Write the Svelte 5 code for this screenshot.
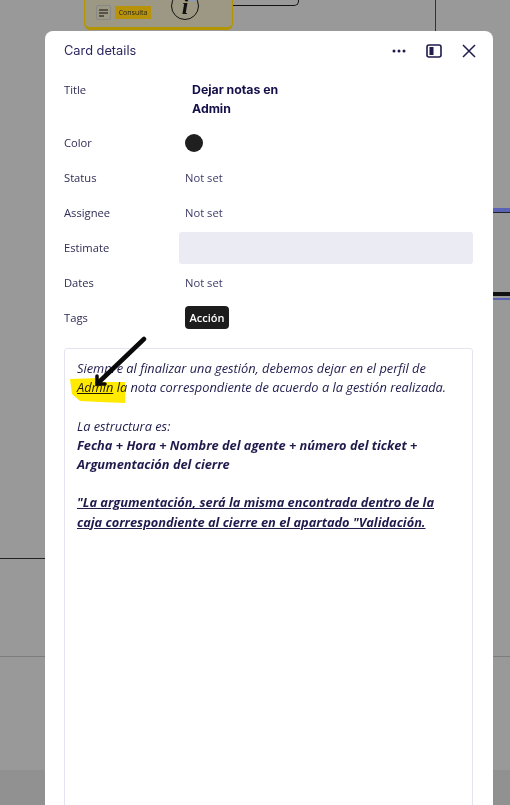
<script>
    let rows = [
        { label: "Status", value: "Not set" },
        { label: "Assignee", value: "Not set" },
        { label: "Estimate", empty: true },
        { label: "Dates", value: "Not set" },
    ];
</script>

<div class="board">
    <!-- canvas behind the dimmed overlay -->
    <div class="node">
        <span class="menu-btn">
            <svg width="9" height="8" viewBox="0 0 9 8"><path d="M0 1h9M0 4h9M0 7h5" stroke="#111" stroke-width="1.2" fill="none" /></svg>
        </span>
        <span class="node-tag">Consulta</span>
        <span class="info">i</span>
        <span class="info-corner"></span>
    </div>
    <div class="node-line"></div>
    <div class="vline"></div>
    <div class="hline left-black"></div>
    <div class="hline faint"></div>
    <div class="hline blue-top"></div>
    <div class="hline blue-bottom"></div>
    <div class="footer-band"></div>

    <div class="modal">
        <header>
            <h2>Card details</h2>
            <div class="actions">
                <svg width="14" height="4" viewBox="0 0 14 4"><circle cx="2" cy="2" r="1.5" /><circle cx="7" cy="2" r="1.5" /><circle cx="12" cy="2" r="1.5" /></svg>
                <svg width="16" height="14" viewBox="0 0 16 14"><rect x="1" y="1" width="14" height="12" rx="2" fill="none" stroke="#1f1b4d" stroke-width="1.6" /><rect x="3.5" y="3" width="4" height="8" /></svg>
                <svg width="14" height="14" viewBox="0 0 14 14"><path d="M1 1l12 12M13 1L1 13" stroke="#1f1b4d" stroke-width="1.5" fill="none" /></svg>
            </div>
        </header>

        <div class="row title-row">
            <span class="label">Title</span>
            <strong>Dejar notas en<br />Admin</strong>
        </div>
        <div class="row">
            <span class="label">Color</span>
            <span class="dot"></span>
        </div>
        {#each rows as row}
            <div class="row">
                <span class="label">{row.label}</span>
                {#if row.empty}
                    <span class="empty"></span>
                {:else}
                    <span class="value">{row.value}</span>
                {/if}
            </div>
        {/each}
        <div class="row">
            <span class="label">Tags</span>
            <span class="tag">Acción</span>
        </div>

        <div class="notes">
            <p><em>Siempre al finalizar una gestión, debemos dejar en el perfil de <u>Admin</u> la nota correspondiente de acuerdo a la gestión realizada.</em></p>
            <p><em>La estructura es:</em><br /><em><b>Fecha + Hora + Nombre del agente + número del ticket + Argumentación del cierre</b></em></p>
            <p><em><b><u>"La argumentación, será la misma encontrada dentro de la caja correspondiente al cierre en el apartado "Validación.</u></b></em></p>
            <!-- highlight and arrow scribbled on top of the screenshot -->
            <svg class="scribble" width="90" height="76" viewBox="0 0 90 76">
                <path d="M5 45 L34 44 L38 48 L60 48 L60 69 L35 68 L15 67 L7 60 Z" fill="#ffea00" />
                <path d="M79 5 L33 49" stroke="#0a0a0a" stroke-width="4.5" stroke-linecap="round" fill="none" />
                <path d="M32 42 L32 50 L40 50" stroke="#0a0a0a" stroke-width="3.5" stroke-linecap="round" fill="none" />
            </svg>
        </div>
    </div>
</div>

<style>
    :global(body) {
        margin: 0;
        background: #999999;
    }

    .board {
        position: relative;
        width: 510px;
        height: 805px;
        overflow: hidden;
        background: #999999;
        font-family: "Open Sans", "Noto Sans", sans-serif;
        color: #1f1b4d;
    }

    .node {
        position: absolute;
        left: 84px;
        top: -18px;
        width: 149px;
        height: 48px;
        box-sizing: border-box;
        background: #9c9884;
        border: 1px solid #b39500;
        border-bottom-width: 3px;
        border-radius: 6px;
    }

    .menu-btn {
        position: absolute;
        left: 11px;
        top: 22px;
        width: 13px;
        height: 13px;
        display: flex;
        align-items: center;
        justify-content: center;
        border: 1px solid #888;
        border-radius: 2px;
    }

    .node-tag {
        position: absolute;
        left: 30px;
        top: 23px;
        width: 36px;
        height: 13px;
        background: #b8930a;
        font: 7px/13px "Open Sans", sans-serif;
        text-align: center;
        color: #222;
    }

    .info {
        position: absolute;
        left: 86px;
        top: 9px;
        width: 26px;
        height: 26px;
        border: 1.5px solid #111;
        border-radius: 50%;
        font: italic bold 24px/26px "Liberation Serif", serif;
        text-align: center;
        color: #111;
    }

    .info-corner {
        position: absolute;
        left: 105px;
        top: 16px;
        width: 5px;
        height: 2px;
        background: #7d9cc9;
    }

    .node-line {
        position: absolute;
        left: 233px;
        top: -19px;
        width: 65px;
        height: 24px;
        border: 1px solid #111;
        border-top: 0;
        border-left: 0;
        border-radius: 0 0 5px 0;
        border-bottom-width: 1.5px;
    }

    .vline {
        position: absolute;
        left: 435px;
        top: 0;
        width: 1px;
        height: 31px;
        background: #333;
    }

    .hline {
        position: absolute;
        left: 0;
        width: 510px;
    }

    .left-black {
        top: 558px;
        width: 45px;
        height: 1px;
        background: #222;
    }

    .faint {
        top: 656px;
        height: 1px;
        background: #7d7d7d;
    }

    .blue-top {
        left: 493px;
        width: 17px;
        top: 208px;
        height: 5px;
        background: linear-gradient(#5a62b5 75%, #222 75%);
    }

    .blue-bottom {
        left: 493px;
        width: 17px;
        top: 292px;
        height: 8px;
        background: linear-gradient(#111 50%, #999 50%, #999 72%, #5a62b5 72%);
    }

    .footer-band {
        position: absolute;
        left: 0;
        right: 0;
        top: 770px;
        bottom: 0;
        background: #919191;
    }

    .modal {
        position: absolute;
        left: 45px;
        top: 31px;
        width: 448px;
        height: 800px;
        box-sizing: border-box;
        padding: 0 20px 0 19px;
        background: #fff;
        border-radius: 8px;
    }

    header {
        height: 40px;
        display: flex;
        align-items: center;
        justify-content: space-between;
    }

    h2 {
        margin: -1px 0 0;
        font: 400 12.8px Inter, sans-serif;
        color: #2a2660;
    }

    .actions {
        display: flex;
        align-items: center;
        gap: 20px;
        margin-right: -3px;
        fill: #1f1b4d;
    }

    .row {
        display: flex;
        align-items: center;
        height: 35px;
        font-size: 11.2px;
    }

    .title-row {
        height: 44px;
        align-items: flex-start;
        margin-top: 10px;
    }

    .label {
        width: 121px;
        flex: none;
        color: #2f2c55;
    }

    .title-row .label {
        line-height: 18px;
    }

    strong {
        margin-left: 7px;
        margin-top: -1px;
        font: 700 12.3px/19px Inter, sans-serif;
        color: #14104a;
    }

    .dot {
        width: 18px;
        height: 18px;
        border-radius: 50%;
        background: #1f1f1f;
    }

    .value {
        color: #3d3a66;
    }

    .empty {
        width: 294px;
        height: 32px;
        margin-left: -6px;
        border-radius: 3px;
        background: #ebebf3;
    }

    .tag {
        padding: 0 4.5px;
        height: 23px;
        line-height: 23px;
        border-radius: 4px;
        background: #1c1c1c;
        color: #fff;
        font-weight: 600;
        font-size: 11px;
    }

    .notes {
        position: relative;
        margin-top: 13px;
        width: 409px;
        height: 600px;
        box-sizing: border-box;
        padding: 10px 16px 10px 12px;
        border: 1px solid #e4e4f1;
        border-radius: 3px;
        font-size: 12.8px;
        line-height: 19.2px;
        color: #1f1b4d;
    }

    .notes p {
        margin: 0 0 19.2px;
    }

    .scribble {
        position: absolute;
        left: 0;
        top: -15px;
        mix-blend-mode: multiply;
    }
</style>
